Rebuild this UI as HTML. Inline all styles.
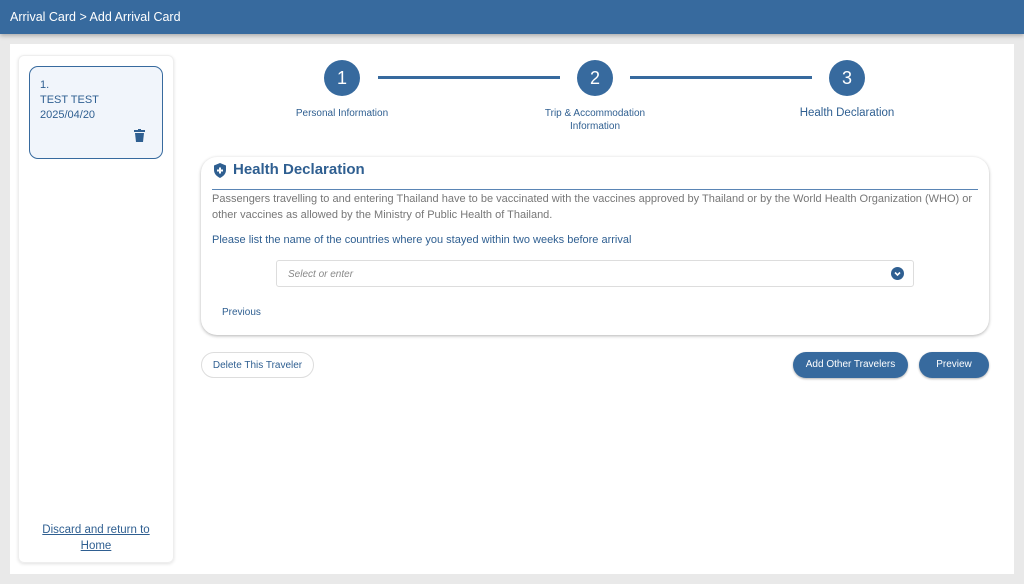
<!DOCTYPE html>
<html><head><style>
*{box-sizing:border-box;margin:0;padding:0}
body{width:1024px;height:584px;background:#e9e9e9;font-family:"Liberation Sans",sans-serif;position:relative;overflow:hidden;color:#2f5f91}
.hdr{position:absolute;left:0;top:0;width:1024px;height:34px;background:#376a9e;color:#fff;font-size:12.5px;padding:10px 10px;box-shadow:0 2px 4px rgba(0,0,0,.25)}
.main{position:absolute;left:10px;top:44px;width:1004px;height:530px;background:#fff}
.side{position:absolute;left:18px;top:55px;width:156px;height:508px;border:1px solid #eee;border-radius:6px;box-shadow:0 1px 3px rgba(0,0,0,.12)}
.tc{position:absolute;left:29px;top:66px;width:134px;height:93px;border:1px solid #376a9e;border-radius:9px;background:#f1f5fb;font-size:11px;padding:11px 10px;line-height:15px;color:#2f5f91}
.circ{position:absolute;width:36px;height:36px;border-radius:50%;background:#376a9e;color:#fff;font-size:18px;text-align:center;line-height:36px}
.ln{position:absolute;top:76px;height:3px;background:#376a9e}
.lbl{position:absolute;font-size:10px;text-align:center;color:#2f5f91;line-height:13px}
.card{position:absolute;left:201px;top:157px;width:788px;height:178px;border-radius:16px;box-shadow:0 1px 3px rgba(0,0,0,.3)}
.btn{position:absolute;top:352px;height:26px;border-radius:13px;font-size:10px;text-align:center;line-height:26px}
</style></head><body>
<div class="hdr">Arrival Card &gt; Add Arrival Card</div>
<div class="main"></div>
<div class="side"></div>
<div class="tc">1.<br>TEST TEST<br>2025/04/20
<svg style="position:absolute;left:104px;top:62px" width="11" height="13" viewBox="0 0 11 13"><rect x="0" y="1" width="11" height="2" fill="#2f5f91"/><rect x="4" y="0" width="3" height="2" fill="#2f5f91"/><path d="M1 4h9l-1 9H2z" fill="#2f5f91"/></svg></div>
<div style="position:absolute;left:18px;top:522px;width:156px;text-align:center;font-size:11.5px;line-height:16px;text-decoration:underline;color:#2f5f91">Discard and return to<br>Home</div>

<div class="circ" style="left:324px;top:60px">1</div>
<div class="ln" style="left:378px;width:182px"></div>
<div class="circ" style="left:577px;top:60px">2</div>
<div class="ln" style="left:630px;width:182px"></div>
<div class="circ" style="left:829px;top:60px">3</div>
<div class="lbl" style="left:272px;width:140px;top:107px">Personal Information</div>
<div class="lbl" style="left:525px;width:140px;top:107px">Trip &amp; Accommodation<br>Information</div>
<div class="lbl" style="left:777px;width:140px;top:107px;font-size:11.5px">Health Declaration</div>

<div class="card"></div>
<svg style="position:absolute;left:213px;top:163px" width="14" height="15" viewBox="0 0 14 15"><path d="M7 0L13 2.5V7C13 11 10 13.5 7 15C4 13.5 1 11 1 7V2.5Z" fill="#2f5f91"/><path d="M7 4.5v6M4 7.5h6" stroke="#fff" stroke-width="2"/></svg>
<div style="position:absolute;left:233px;top:161px;font-size:15px;font-weight:bold;color:#2f5f91">Health Declaration</div>
<div style="position:absolute;left:212px;top:189px;width:766px;height:1px;background:#5a85b5"></div>
<div style="position:absolute;left:212px;top:192px;width:770px;font-size:11px;line-height:15.5px;color:#777">Passengers travelling to and entering Thailand have to be vaccinated with the vaccines approved by Thailand or by the World Health Organization (WHO) or other vaccines as allowed by the Ministry of Public Health of Thailand.</div>
<div style="position:absolute;left:212px;top:234px;font-size:11px;color:#2f5f91">Please list the name of the countries where you stayed within two weeks before arrival</div>
<div style="position:absolute;left:276px;top:260px;width:638px;height:27px;border:1px solid #ddd;border-radius:3px;font-size:10px;font-style:italic;color:#888;padding:8px 11px">Select or enter
<svg style="position:absolute;right:9px;top:6px" width="13" height="13" viewBox="0 0 13 13"><circle cx="6.5" cy="6.5" r="6.5" fill="#2f5f91"/><path d="M4 5.5l2.5 2.5 2.5-2.5" stroke="#fff" stroke-width="1.6" fill="none"/></svg></div>
<div style="position:absolute;left:222px;top:307px;font-size:10px;color:#2f5f91">Previous</div>
<div class="btn" style="left:201px;width:113px;border:1px solid #ddd;color:#2f5f91">Delete This Traveler</div>
<div class="btn" style="left:793px;width:115px;background:#376a9e;color:#fff;box-shadow:0 1px 2px rgba(0,0,0,.3)">Add Other Travelers</div>
<div class="btn" style="left:919px;width:70px;background:#376a9e;color:#fff;box-shadow:0 1px 2px rgba(0,0,0,.3)">Preview</div>
</body></html>
